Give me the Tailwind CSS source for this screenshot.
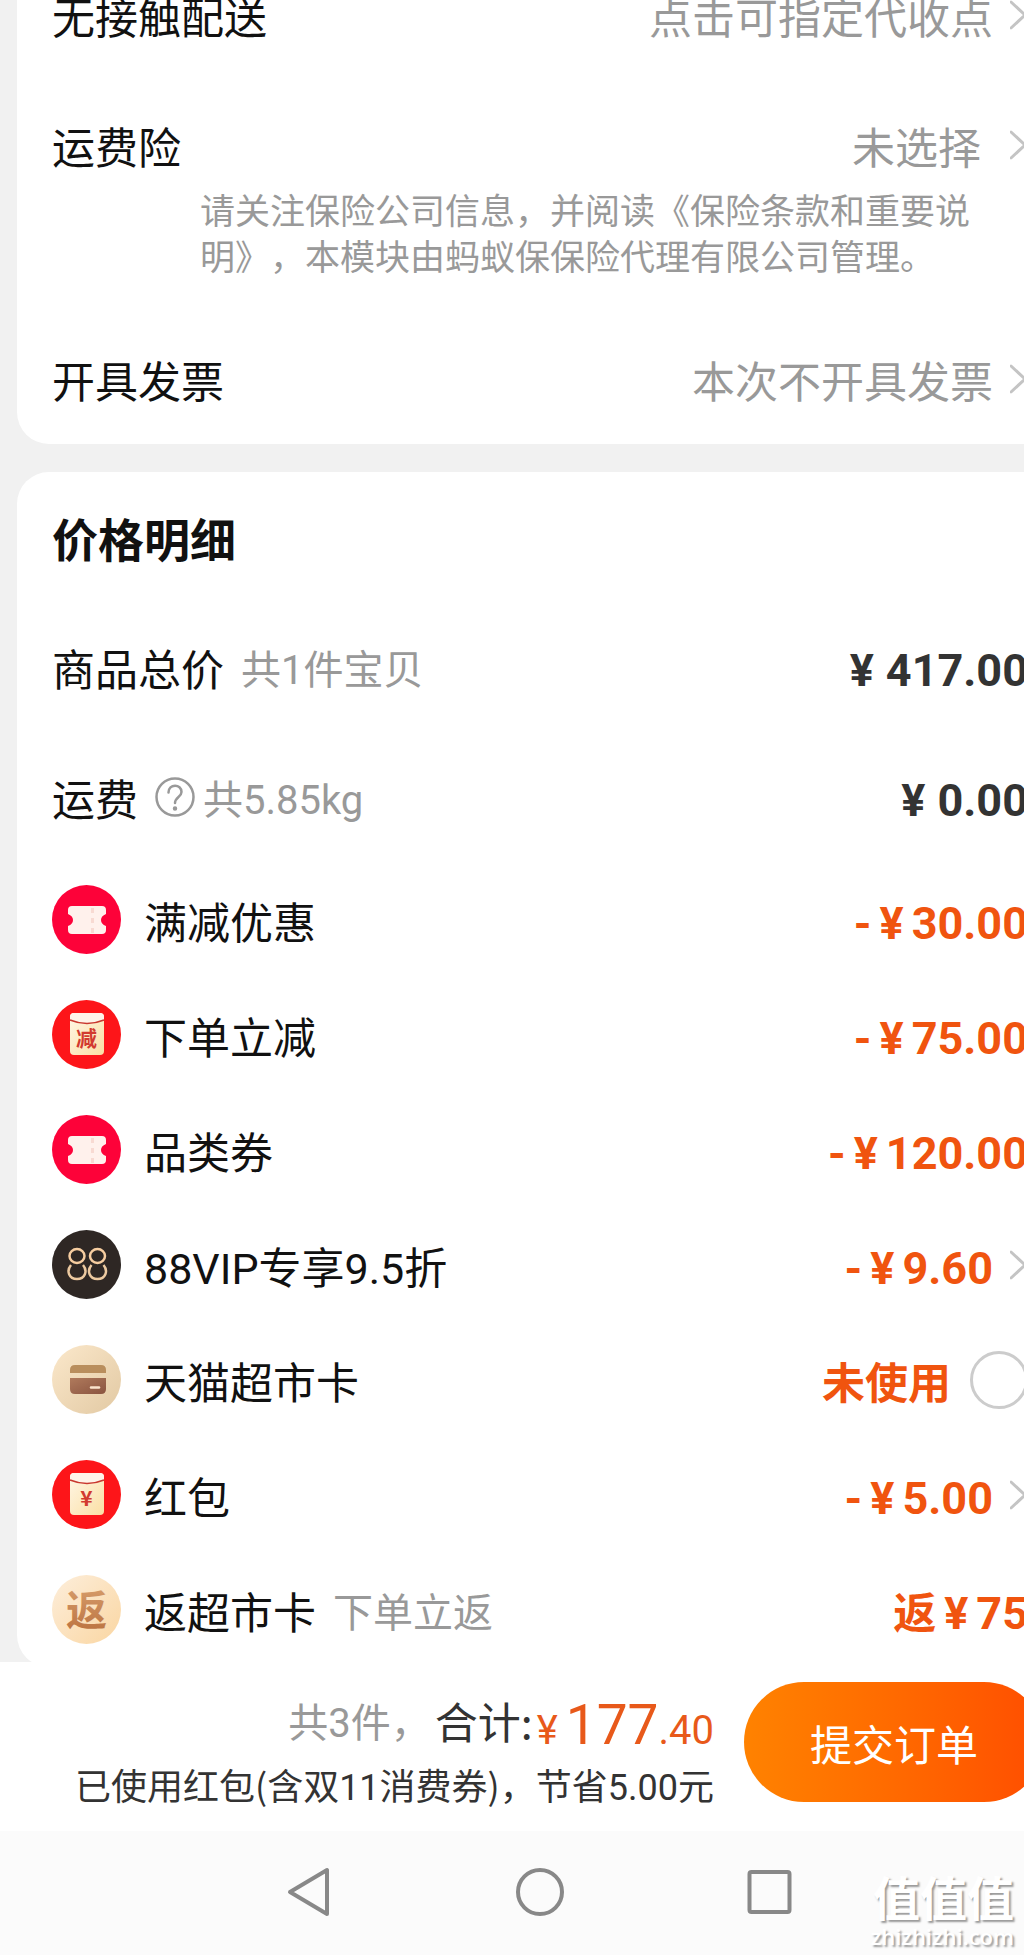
<!DOCTYPE html>
<html lang="zh-CN">
<head>
  <meta charset="UTF-8" />
  <meta name="viewport" content="width=device-width, initial-scale=1.0"/>
  <title>确认订单</title>
  <script src="https://cdn.jsdelivr.net/npm/@tailwindcss/browser@4"></script>
</head>
<body class="bg-[#f1f1f1] overflow-hidden font-['Noto_Sans_CJK_SC',sans-serif] text-[#111111]">

  <!-- Shared shapes -->
  <svg class="absolute size-0" aria-hidden="true">
    <defs>
      <linearGradient id="cream" x1="0" y1="0" x2="1" y2="1">
        <stop offset="0" stop-color="#fff6e6"/>
        <stop offset="1" stop-color="#fbdfa4"/>
      </linearGradient>
    </defs>
    <symbol id="chevron" viewBox="0 0 18 30">
      <path d="M1 2 L15 15 L1 28" fill="none" stroke="#c4c4c4" stroke-width="3" stroke-linecap="round" stroke-linejoin="round"/>
    </symbol>
    <symbol id="coupon" viewBox="0 0 69 69">
      <circle cx="34.5" cy="34.5" r="34.5" fill="#fd0239"/>
      <path d="M20 21 H50 Q54 21 54 25 V29 Q49 31 49 35 Q49 39 54 41 V45 Q54 49 50 49 H20 Q16 49 16 45 V41 Q21 39 21 35 Q21 31 16 29 V25 Q16 21 20 21 Z" fill="#fff1ec"/>
      <path d="M40.5 23 V48" stroke="#f8dad2" stroke-width="3" stroke-dasharray="5 5"/>
    </symbol>
    <symbol id="packet" viewBox="0 0 69 69">
      <circle cx="34.5" cy="34.5" r="34.5" fill="#fd1519"/>
      <rect x="18" y="13" width="34" height="42" rx="4" fill="url(#cream)"/>
      <path d="M18 20 V17 Q18 13 22 13 H48 Q52 13 52 17 V20 Q35 27 18 20 Z" fill="#fff4ea"/>
      <path d="M18 20 Q35 27 52 20" fill="none" stroke="#c9382f" stroke-width="1.5"/>
    </symbol>
  </svg>

  <div class="-mr-14 h-screen flex flex-col">
    <main class="flex-1 min-h-0 overflow-hidden px-[17px] space-y-7 text-[43px] leading-[60px]">

      <!-- Delivery options -->
      <section class="bg-white rounded-b-[32px] px-[35px] pb-6">
        <div class="h-[30px] mb-[74px] flex items-center justify-between">
          <span>无接触配送</span>
          <button class="flex items-center gap-[17px] text-[#999999]">点击可指定代收点<svg class="w-[18px] h-[30px]"><use href="#chevron"/></svg></button>
        </div>
        <div class="h-[82px] flex items-center justify-between">
          <span>运费险</span>
          <button class="flex items-center gap-[29px] text-[#999999]">未选择<svg class="w-[18px] h-[30px]"><use href="#chevron"/></svg></button>
        </div>
        <p class="ml-[148px] mr-[40px] mb-[60px] text-[35px] leading-[46px] text-[#999999] [text-spacing-trim:space-all]">请关注保险公司信息，并阅读《保险条款和重要说明》，本模块由蚂蚁保保险代理有限公司管理。</p>
        <div class="h-[82px] flex items-center justify-between">
          <span>开具发票</span>
          <button class="flex items-center gap-[17px] text-[#999999]">本次不开具发票<svg class="w-[18px] h-[30px]"><use href="#chevron"/></svg></button>
        </div>
      </section>

      <!-- Price details -->
      <section class="bg-white rounded-[32px] px-[35px]">
        <h2 class="h-[130px] flex items-center text-[46px] font-bold">价格明细</h2>

        <div class="h-[130px] flex items-center justify-between">
          <div class="flex items-center gap-[17px]">
            <span>商品总价</span>
            <span class="text-[40px] text-[#999999]">共<span class="font-['Roboto'] leading-none">1</span>件宝贝</span>
          </div>
          <div class="font-bold text-[#333333]"><span class="font-['Roboto'] text-[45px] leading-none"><span class="mr-3">¥</span>417.00</span></div>
        </div>

        <div class="h-[130px] flex items-center justify-between">
          <div class="flex items-center">
            <span>运费</span>
            <button class="ml-[17px] mr-2 size-10" aria-label="运费说明">
              <svg viewBox="0 0 40 40" fill="none" stroke="#999999" stroke-width="2.5" stroke-linecap="round">
                <circle cx="20" cy="20" r="18.5"/>
                <path d="M13.5 15.5 C13.5 6.5 26.5 6.5 26.5 15 C26.5 20 20 20 20 26"/>
                <circle cx="20" cy="31.5" r="1" fill="#999999"/>
              </svg>
            </button>
            <span class="text-[40px] text-[#999999]">共<span class="font-['Roboto'] leading-none">5.85kg</span></span>
          </div>
          <div class="font-bold text-[#333333]"><span class="font-['Roboto'] text-[45px] leading-none"><span class="mr-3">¥</span>0.00</span></div>
        </div>

        <div class="h-[115px] flex items-center gap-[23px]">
          <svg class="size-[69px]"><use href="#coupon"/></svg>
          <span>满减优惠</span>
          <div class="ml-auto font-bold text-[#f0540f]"><span class="font-['Roboto'] text-[45px] leading-none"><span class="mr-2">-</span><span class="mr-2">¥</span>30.00</span></div>
        </div>

        <div class="h-[115px] flex items-center gap-[23px]">
          <svg class="size-[69px]" viewBox="0 0 69 69">
            <use href="#packet"/>
            <text x="34.5" y="46" text-anchor="middle" font-size="21" font-weight="700" fill="#d23a30">减</text>
          </svg>
          <span>下单立减</span>
          <div class="ml-auto font-bold text-[#f0540f]"><span class="font-['Roboto'] text-[45px] leading-none"><span class="mr-2">-</span><span class="mr-2">¥</span>75.00</span></div>
        </div>

        <div class="h-[115px] flex items-center gap-[23px]">
          <svg class="size-[69px]"><use href="#coupon"/></svg>
          <span>品类券</span>
          <div class="ml-auto font-bold text-[#f0540f]"><span class="font-['Roboto'] text-[45px] leading-none"><span class="mr-2">-</span><span class="mr-2">¥</span>120.00</span></div>
        </div>

        <div class="h-[115px] flex items-center gap-[23px]">
          <svg class="size-[69px]" viewBox="0 0 69 69">
            <circle cx="34.5" cy="34.5" r="34.5" fill="#2e2724"/>
            <g fill="none" stroke="#f6cda0" stroke-width="2.5">
              <ellipse cx="25" cy="26" rx="7.5" ry="7"/>
              <ellipse cx="45.5" cy="26" rx="7.5" ry="7"/>
            </g>
            <g fill="none" stroke="#ecc9a0" stroke-width="2.5">
              <path d="M19 35 C14 41 17 49 25 49 C33 49 36 41 31 35"/>
              <path d="M39.5 35 C34.5 41 37.500 49 45.5 49 C53.5 49 56.5 41 51.5 35"/>
            </g>
          </svg>
          <span><span class="font-['Roboto'] leading-none">88VIP</span>专享<span class="font-['Roboto'] leading-none">9.5</span>折</span>
          <button class="ml-auto flex items-center gap-[17px] font-bold text-[#f0540f]">
            <span><span class="font-['Roboto'] text-[45px] leading-none"><span class="mr-2">-</span><span class="mr-2">¥</span>9.60</span></span>
            <svg class="w-[18px] h-[30px]"><use href="#chevron"/></svg>
          </button>
        </div>

        <div class="h-[115px] flex items-center gap-[23px]">
          <svg class="size-[69px]" viewBox="0 0 69 69">
            <defs>
              <linearGradient id="sand" x1="0" y1="0" x2="1" y2="1">
                <stop offset="0" stop-color="#fbe8cb"/>
                <stop offset="1" stop-color="#e2c9a3"/>
              </linearGradient>
              <linearGradient id="brown" x1="0" y1="0" x2="1" y2="1">
                <stop offset="0" stop-color="#b07a5c"/>
                <stop offset="1" stop-color="#8a5440"/>
              </linearGradient>
            </defs>
            <circle cx="34.5" cy="34.5" r="34.5" fill="url(#sand)"/>
            <path d="M18 28 V25 Q18 20 23 20 H49 Q54 20 54 25 V28 Z" fill="#b98e5d"/>
            <path d="M18 33 H54 V44 Q54 49 49 49 H23 Q18 49 18 44 Z" fill="url(#brown)"/>
            <path d="M39 42.5 H47" stroke="#fbe4cd" stroke-width="2.5" stroke-linecap="round"/>
          </svg>
          <label for="card">天猫超市卡</label>
          <span class="ml-auto -mr-1 font-bold text-[#f0540f]">未使用</span>
          <input id="card" type="checkbox" class="appearance-none size-[58px] rounded-full border-[3px] border-[#cccccc] checked:bg-[#ff5000]" />
        </div>

        <div class="h-[115px] flex items-center gap-[23px]">
          <svg class="size-[69px]" viewBox="0 0 69 69">
            <use href="#packet"/>
            <text x="34.5" y="46" text-anchor="middle" font-size="21" font-weight="700" fill="#d23a30">¥</text>
          </svg>
          <span>红包</span>
          <button class="ml-auto flex items-center gap-[17px] font-bold text-[#f0540f]">
            <span><span class="font-['Roboto'] text-[45px] leading-none"><span class="mr-2">-</span><span class="mr-2">¥</span>5.00</span></span>
            <svg class="w-[18px] h-[30px]"><use href="#chevron"/></svg>
          </button>
        </div>

        <div class="h-[115px] flex items-center gap-[23px]">
          <svg class="size-[69px]" viewBox="0 0 69 69">
            <defs>
              <linearGradient id="peach" x1="0" y1="0" x2="1" y2="1">
                <stop offset="0" stop-color="#fdeedb"/>
                <stop offset="1" stop-color="#fad6a2"/>
              </linearGradient>
              <linearGradient id="copper" x1="0" y1="0" x2="0" y2="1">
                <stop offset="0" stop-color="#dba473"/>
                <stop offset="1" stop-color="#b96f3c"/>
              </linearGradient>
            </defs>
            <circle cx="34.5" cy="34.5" r="34.5" fill="url(#peach)"/>
            <text x="34.5" y="50" text-anchor="middle" font-size="41" font-weight="700" fill="url(#copper)">返</text>
          </svg>
          <div class="flex items-center gap-[17px]">
            <span>返超市卡</span>
            <span class="text-[40px] text-[#999999]">下单立返</span>
          </div>
          <div class="ml-auto font-bold text-[#f0540f]"><span class="mr-2">返</span><span class="font-['Roboto'] text-[45px] leading-none"><span class="mr-2">¥</span>75</span></div>
        </div>
      </section>
    </main>

    <!-- Submit bar -->
    <footer class="h-[169px] bg-white pr-9 pt-5 pb-6 flex items-start justify-end gap-[30px]">
      <div class="flex flex-col items-end pt-1">
        <div class="h-[68px] flex items-center text-[43px] text-[#333333]">
          <span class="mr-1 text-[40px] text-[#999999]">共<span class="font-['Roboto'] leading-none">3</span>件，</span>
          <span>合计:</span>
          <span class="ml-1 text-[55px] leading-[68px] text-[#e8591a]"><span class="font-['Roboto'] leading-none"><span class="mr-2 text-[40px]">¥</span>177<span class="text-[40px]">.40</span></span></span>
        </div>
        <p class="text-[36px] leading-[60px] text-[#333333] [text-spacing-trim:space-all]">已使用红包(含双<span class="font-['Roboto'] leading-none">11</span>消费券)，节省<span class="font-['Roboto'] leading-none">5.00</span>元</p>
      </div>
      <button class="w-[300px] h-[120px] rounded-full bg-linear-to-r from-[#ff8200] to-[#ff4d00] text-[42px] text-white">提交订单</button>
    </footer>

    <!-- System navigation -->
    <nav class="relative h-[124px] bg-[#fbfbfb] flex items-center justify-center gap-[182px]">
      <button class="size-12" aria-label="返回">
        <svg class="overflow-visible" viewBox="0 0 48 48" fill="none" stroke="#888888" stroke-width="4" stroke-linejoin="round"><path d="M4 23 L41 1 V45 Z"/></svg>
      </button>
      <button class="size-12" aria-label="主页">
        <svg class="overflow-visible" viewBox="0 0 48 48" fill="none" stroke="#888888" stroke-width="4"><circle cx="24" cy="23" r="22"/></svg>
      </button>
      <button class="size-12" aria-label="最近任务">
        <svg viewBox="0 0 48 48" fill="none" stroke="#888888" stroke-width="4"><rect x="3.5" y="3" width="40" height="40" rx="2"/></svg>
      </button>
      <div class="absolute right-[66px] bottom-[5px] text-right text-white [text-shadow:2px_2px_2px_#999999]">
        <p class="text-[47px] leading-[52px] font-bold">值值值</p>
        <p class="font-['Open_Sans',sans-serif] text-[22px] leading-[28px] font-semibold">zhizhizhi.com</p>
      </div>
    </nav>
  </div>

</body>
</html>
